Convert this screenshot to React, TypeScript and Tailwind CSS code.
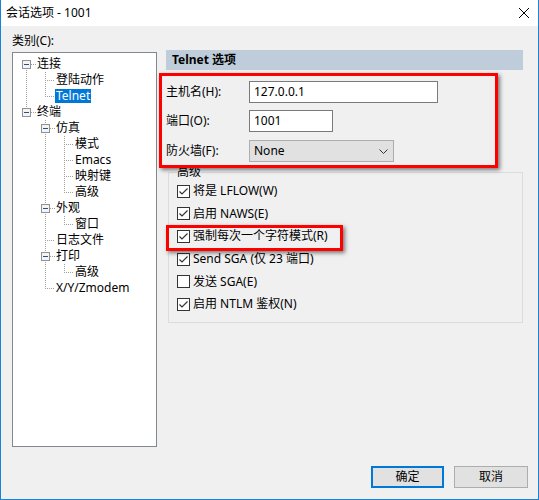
import React from 'react'

type TreeRow = { label: string; level: number; selected?: boolean }

const treeRows: TreeRow[] = [
  { label: '连接', level: 0 },
  { label: '登陆动作', level: 1 },
  { label: 'Telnet', level: 1, selected: true },
  { label: '终端', level: 0 },
  { label: '仿真', level: 1 },
  { label: '模式', level: 2 },
  { label: 'Emacs', level: 2 },
  { label: '映射键', level: 2 },
  { label: '高级', level: 2 },
  { label: '外观', level: 1 },
  { label: '窗口', level: 2 },
  { label: '日志文件', level: 1 },
  { label: '打印', level: 1 },
  { label: '高级', level: 2 },
  { label: 'X/Y/Zmodem', level: 1 },
]

const indent = ['pl-[23px]', 'pl-[42px]', 'pl-[61px]']

const options = [
  { label: '将是 LFLOW(W)', checked: true },
  { label: '启用 NAWS(E)', checked: true },
  { label: '强制每次一个字符模式(R)', checked: true },
  { label: 'Send SGA (仅 23 端口)', checked: true },
  { label: '发送 SGA(E)', checked: false },
  { label: '启用 NTLM 鉴权(N)', checked: true },
]

// tree connectors, drawn in page coordinates
function TreeLines() {
  const vLines = [
    [26, 68, 108],
    [45, 72, 96],
    [45, 120, 288],
    [64, 136, 192],
    [64, 216, 224],
    [64, 264, 272],
  ]
  const hLines = [
    [31, 36, 64],
    [31, 36, 112],
    [45, 55, 80],
    [45, 55, 96],
    [50, 55, 128],
    [50, 55, 208],
    [45, 55, 240],
    [50, 55, 256],
    [45, 55, 288],
    [64, 74, 144],
    [64, 74, 160],
    [64, 74, 176],
    [64, 74, 192],
    [64, 74, 224],
    [64, 74, 272],
  ]
  const boxes = [
    [26, 64],
    [26, 112],
    [45, 128],
    [45, 208],
    [45, 256],
  ]
  return (
    <svg
      className="absolute inset-0 pointer-events-none"
      width={143}
      height={393}
      viewBox="13 53 143 393"
      shapeRendering="crispEdges"
    >
      {vLines.map(([x, y1, y2], i) => (
        <line key={'v' + i} x1={x + 0.5} x2={x + 0.5} y1={y1} y2={y2} stroke="#a0a0a0" strokeDasharray="1 1" />
      ))}
      {hLines.map(([x1, x2, y], i) => (
        <line key={'h' + i} x1={x1} x2={x2} y1={y + 0.5} y2={y + 0.5} stroke="#a0a0a0" strokeDasharray="1 1" />
      ))}
      {boxes.map(([cx, cy], i) => (
        <g key={'b' + i}>
          <rect x={cx - 3.5} y={cy - 3.5} width={8} height={8} fill="#f4f4f4" stroke="#919191" />
          <line x1={cx - 2} x2={cx + 3} y1={cy + 0.5} y2={cy + 0.5} stroke="#2b4f8c" />
        </g>
      ))}
    </svg>
  )
}

function CheckBox({ checked }: { checked: boolean }) {
  return (
    <span className="flex h-[13px] w-[13px] items-center justify-center border border-[#333333] bg-white">
      {checked && (
        <svg width="11" height="11" viewBox="0 0 11 11">
          <path d="M1.5 5.5 L4 8 L9.5 2.5" fill="none" stroke="#333333" strokeWidth="1.2" />
        </svg>
      )}
    </span>
  )
}

export default function App() {
  return (
    <div className="relative flex h-[500px] w-[539px] flex-col border-x border-b border-[#1883d7] bg-[#f0f0f0] font-['Noto_Sans','Noto_Sans_CJK_SC',sans-serif] text-[12px] text-black">
      {/* Title bar */}
      <div className="flex h-[26px] shrink-0 items-center justify-between bg-white pl-[5px] pr-[9px]">
        <span className="leading-[16px]">会话选项 - 1001</span>
        <svg width="10" height="10" viewBox="0 0 10 10">
          <path d="M0 0 L10 10 M10 0 L0 10" stroke="#000" strokeWidth="1" />
        </svg>
      </div>

      <div className="flex flex-1 flex-col pl-[11px] pr-[10px]">
        <div className="flex">
          {/* Category tree */}
          <div className="w-[145px] pt-[7px]">
            <div className="h-[16px] leading-[16px]">类别(C):</div>
            <div className="relative mt-[3px] h-[395px] border border-[#828790] bg-white pt-[3px]">
              <TreeLines />
              {treeRows.map((row, i) => (
                <div key={i} className={`flex h-[16px] items-center ${indent[row.level]}`}>
                  <span
                    className={`px-[1px] leading-[14px] ${row.selected ? 'bg-[#0078d7] text-white' : ''}`}
                  >
                    {row.label}
                  </span>
                </div>
              ))}
            </div>
          </div>

          {/* Telnet options */}
          <div className="ml-[9px] w-[357px] pt-[24px]">
            <div className="h-[20px] bg-[#bfcddb] pl-[6px] font-bold leading-[20px]">Telnet 选项</div>

            <div className="mt-[11px] flex h-[22px] items-center">
              <span className="w-[83px]">主机名(H):</span>
              <div className="h-[22px] w-[189px] border border-[#7a7a7a] bg-white pl-[4px] leading-[20px]">127.0.0.1</div>
            </div>
            <div className="mt-[7px] flex h-[22px] items-center">
              <span className="w-[83px]">端口(O):</span>
              <div className="h-[22px] w-[84px] border border-[#7a7a7a] bg-white pl-[4px] leading-[20px]">1001</div>
            </div>
            <div className="mt-[8px] flex h-[22px] items-center">
              <span className="w-[83px]">防火墙(F):</span>
              <div className="flex h-[22px] w-[145px] items-center justify-between border border-[#adadad] bg-[#e1e1e1] pl-[4px] pr-[5px]">
                <span className="leading-[20px]">None</span>
                <svg width="9" height="5" viewBox="0 0 9 5">
                  <path d="M0.5 0.5 L4.5 4.5 L8.5 0.5" fill="none" stroke="#333" strokeWidth="1" />
                </svg>
              </div>
            </div>

            <fieldset className="ml-[2px] mt-[2px] w-[355px] border border-[#dcdcdc] pb-[6px] pl-[8px]">
              <legend className="leading-[16px]">高级</legend>
              {options.map((opt) => (
                <div key={opt.label} className="flex h-[22.6px] items-center gap-[3px]">
                  <CheckBox checked={opt.checked} />
                  <span>{opt.label}</span>
                </div>
              ))}
            </fieldset>
          </div>
        </div>

        {/* Buttons */}
        <div className="mt-[19px] flex justify-end gap-[10px]">
          <button className="h-[22px] w-[73px] border-2 border-[#0078d7] bg-[#e1e1e1]">确定</button>
          <button className="h-[22px] w-[74px] border border-[#adadad] bg-[#e1e1e1]">取消</button>
        </div>
      </div>

      {/* Red annotation frames */}
      <div className="absolute left-[158px] top-[73px] h-[95px] w-[339px] border-[3px] border-[#ff0000] shadow-[2px_2px_4px_rgba(0,0,0,0.5)]" />
      <div className="absolute left-[165px] top-[225px] h-[26px] w-[177px] border-[3px] border-[#ff0000] shadow-[2px_2px_4px_rgba(0,0,0,0.5)]" />
    </div>
  )
}
